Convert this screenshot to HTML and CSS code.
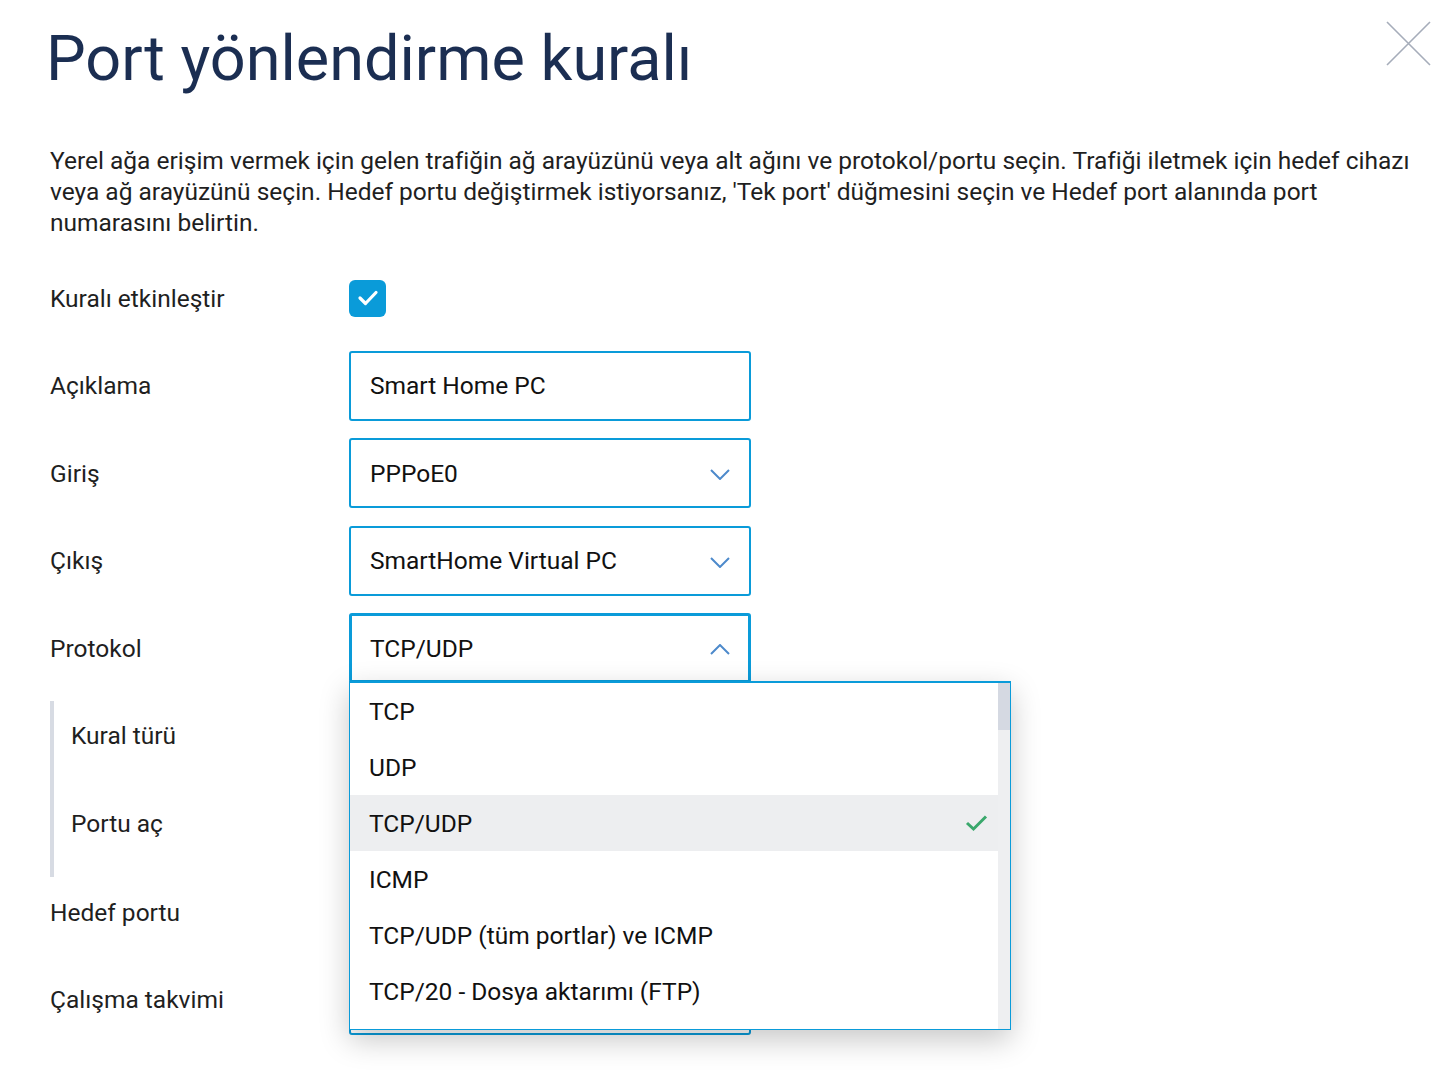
FILE: index.html
```html
<!DOCTYPE html>
<html lang="tr">
<head>
    <meta charset="UTF-8">
    <title>Port yönlendirme kuralı</title>
    <link rel="stylesheet" href="styles.css">
</head>
<body>
    <div class="dialog">
        <button class="close-btn" aria-label="Kapat">
            <svg width="46" height="46" viewBox="0 0 46 46"><path d="M1 1 L44 44 M44 1 L1 44" stroke="#a6adba" stroke-width="1.6" fill="none"/></svg>
        </button>
        <h1 class="title">Port yönlendirme kuralı</h1>
        <p class="intro">Yerel ağa erişim vermek için gelen trafiğin ağ arayüzünü veya alt ağını ve protokol/portu seçin. Trafiği iletmek için hedef cihazı veya ağ arayüzünü seçin. Hedef portu değiştirmek istiyorsanız, 'Tek port' düğmesini seçin ve Hedef port alanında port numarasını belirtin.</p>

        <div class="form">
            <div class="row">
                <label class="label">Kuralı etkinleştir</label>
                <span class="checkbox">
                    <svg width="22" height="18" viewBox="0 0 22 18"><path d="M3 9 L8.5 14.5 L19 3.5" stroke="#fff" stroke-width="3.2" fill="none" stroke-linecap="round" stroke-linejoin="round"/></svg>
                </span>
            </div>
            <div class="row">
                <label class="label">Açıklama</label>
                <div class="field">Smart Home PC</div>
            </div>
            <div class="row">
                <label class="label">Giriş</label>
                <div class="field select">PPPoE0
                    <svg class="chevron" width="20" height="11" viewBox="0 0 20 11"><path d="M1 1 L10 10 L19 1" stroke="#4d8acb" stroke-width="2" fill="none"/></svg>
                </div>
            </div>
            <div class="row">
                <label class="label">Çıkış</label>
                <div class="field select">SmartHome Virtual PC
                    <svg class="chevron" width="20" height="11" viewBox="0 0 20 11"><path d="M1 1 L10 10 L19 1" stroke="#4d8acb" stroke-width="2" fill="none"/></svg>
                </div>
            </div>
            <div class="row">
                <label class="label">Protokol</label>
                <div class="field select open">TCP/UDP
                    <svg class="chevron" width="20" height="11" viewBox="0 0 20 11"><path d="M1 10 L10 1 L19 10" stroke="#4d8acb" stroke-width="2" fill="none"/></svg>
                    <div class="dropdown">
                        <ul class="options">
                            <li>TCP</li>
                            <li>UDP</li>
                            <li class="selected">TCP/UDP
                                <svg width="24" height="18" viewBox="0 0 24 18"><path d="M2 9 L8.5 15 L21 2.5" stroke="#3aa86c" stroke-width="3" fill="none"/></svg>
                            </li>
                            <li>ICMP</li>
                            <li>TCP/UDP (tüm portlar) ve ICMP</li>
                            <li>TCP/20 - Dosya aktarımı (FTP)</li>
                        </ul>
                        <div class="scrollbar"><div class="thumb"></div></div>
                    </div>
                </div>
            </div>

            <div class="group">
                <div class="row">
                    <label class="label">Kural türü</label>
                    <span class="radio"></span>
                </div>
                <div class="row">
                    <label class="label">Portu aç</label>
                    <div class="field hidden-field"></div>
                </div>
            </div>

            <div class="row">
                <label class="label">Hedef portu</label>
                <div class="field hidden-field"></div>
            </div>
            <div class="row">
                <label class="label">Çalışma takvimi</label>
                <div class="field hidden-field"></div>
            </div>
        </div>
    </div>
</body>
</html>
```

FILE: styles.css
```css
* {
    margin: 0;
    padding: 0;
    box-sizing: border-box;
}
body {
    font-family: Roboto, 'Liberation Sans', sans-serif;
    background-color: #ffffff;
    color: #1c1c1c;
    overflow: hidden;
}
.dialog {
    position: relative;
    padding: 20px 30px 0 50px;
    height: 1090px;
}
.close-btn {
    position: absolute;
    top: 21px;
    right: 11px;
    background: none;
    border: none;
    cursor: pointer;
}
.title {
    font-size: 63px;
    font-weight: 400;
    line-height: 77px;
    color: #1b2e52;
    margin-left: -4px;
}
.intro {
    font-size: 24.5px;
    line-height: 31px;
    margin-top: 48px;
    color: #1f1f1f;
}
.form {
    margin-top: 25px;
}
.row {
    display: flex;
    align-items: center;
    height: 70px;
    margin-bottom: 17.5px;
}
.label {
    width: 299px;
    flex-shrink: 0;
    font-size: 24.5px;
    color: #1f1f1f;
}
.checkbox {
    width: 37px;
    height: 37px;
    border-radius: 6px;
    background-color: #0a9bd9;
    display: flex;
    align-items: center;
    justify-content: center;
}
.field {
    position: relative;
    width: 402px;
    height: 70px;
    border: 2px solid #0a9bd9;
    border-radius: 3px;
    padding-left: 19px;
    display: flex;
    align-items: center;
    font-size: 24.5px;
    color: #111;
}
.select .chevron {
    position: absolute;
    right: 19px;
    top: 29px;
}
.field.open {
    border-width: 3px;
    padding-left: 18px;
    z-index: 5;
}
.field.open .chevron {
    right: 18px;
    top: 28px;
}
.dropdown {
    position: absolute;
    top: 65px;
    left: -3px;
    width: 662px;
    height: 349px;
    background-color: #fff;
    border: 1px solid #0a9bd9;
    border-top-width: 2px;
    box-shadow: 0 10px 28px rgba(0,0,0,0.22);
    display: flex;
    overflow: hidden;
}
.options {
    list-style-type: none;
    flex: 1;
}
.options li {
    height: 56px;
    display: flex;
    align-items: center;
    justify-content: space-between;
    padding: 0 9px 0 19px;
    font-size: 24.5px;
    color: #111;
}
.options li.selected {
    background-color: #edeef0;
}
.scrollbar {
    width: 12px;
    background-color: #eeeff1;
}
.thumb {
    height: 47px;
    background-color: #d5d9e2;
}
.group {
    border-left: 4px solid #d7dbe3;
    padding-left: 17px;
    padding-bottom: 19px;
}
.group .label {
    width: 278px;
}
.group .row:last-child {
    margin-bottom: 0;
}
.radio {
    width: 24px;
    height: 24px;
    border: 2px solid #0a9bd9;
    border-radius: 50%;
}
.hidden-field {
    border-width: 2px;
}
```
